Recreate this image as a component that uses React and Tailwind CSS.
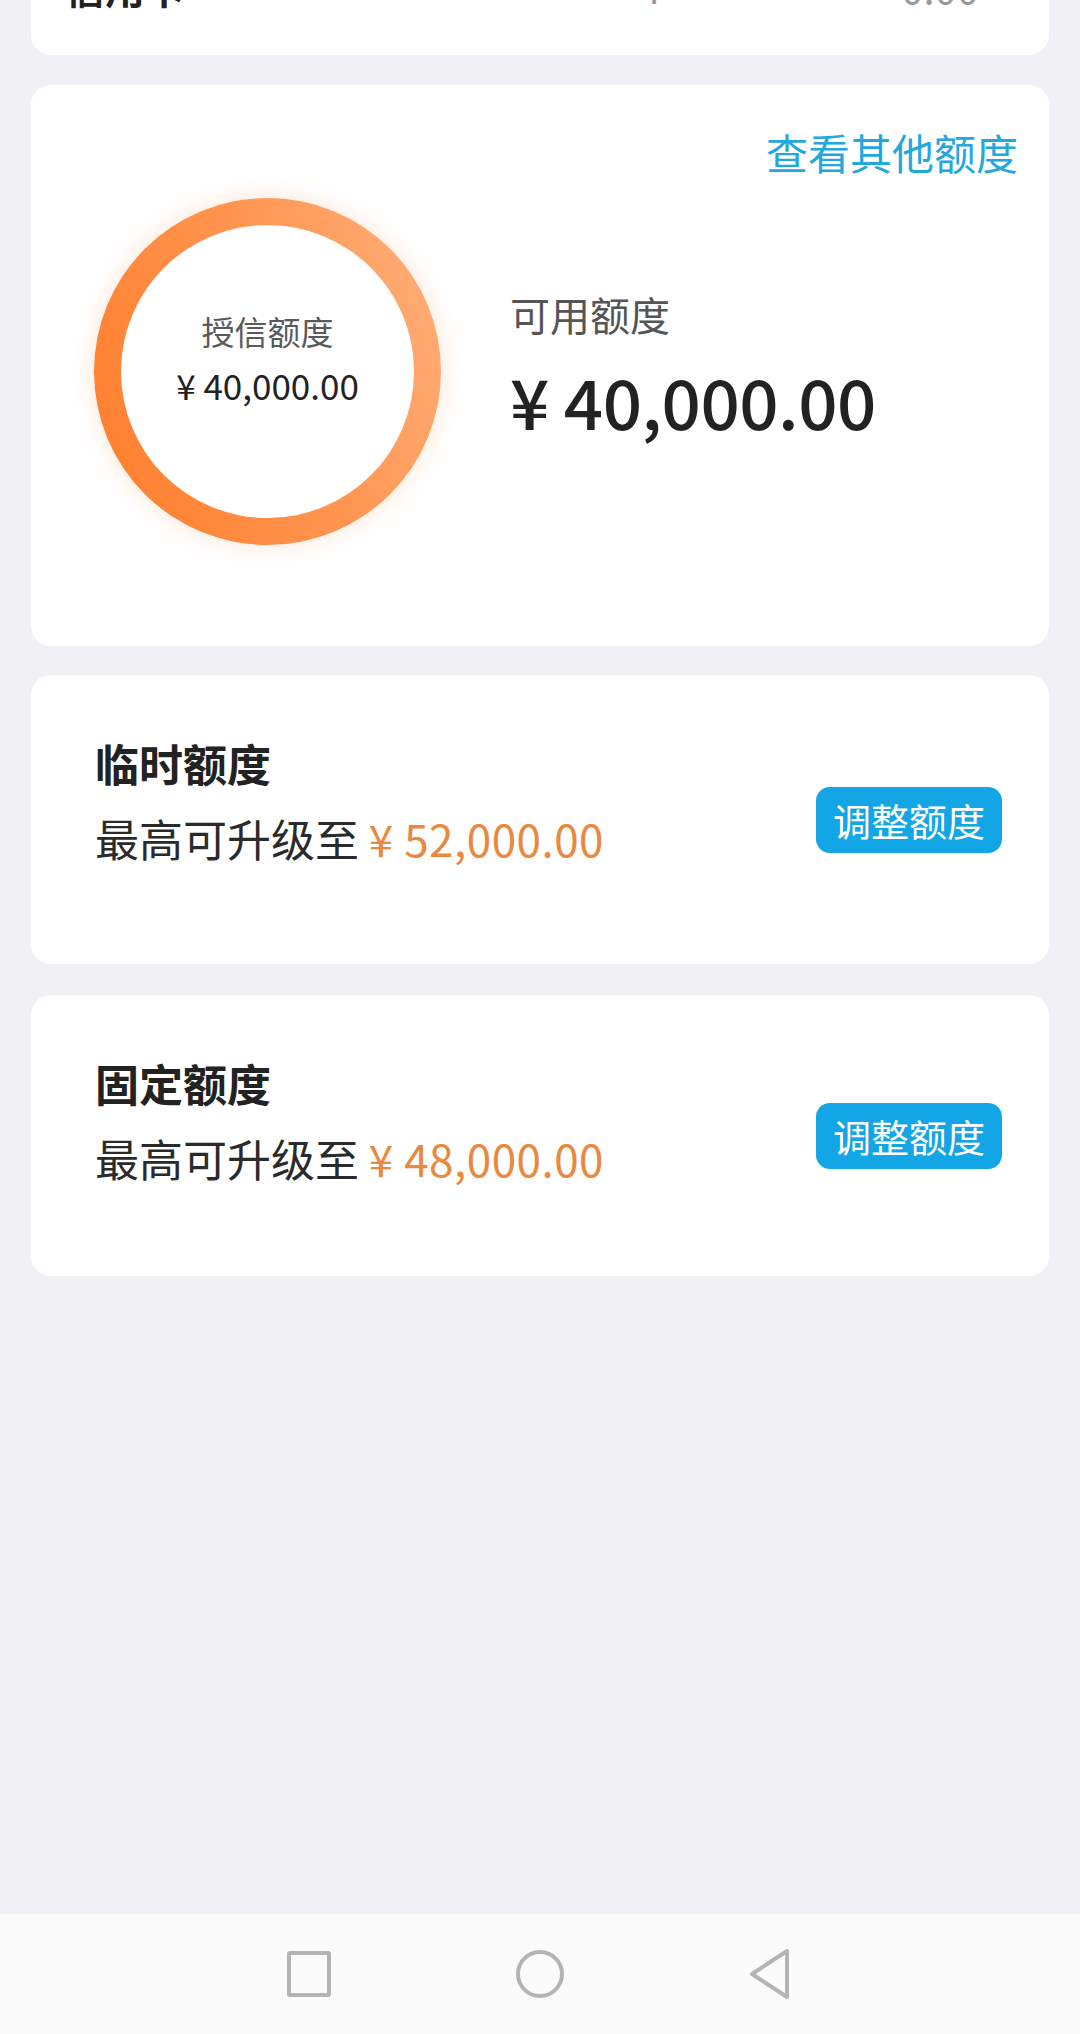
import React from "react";

const cjk = { fontFamily: '"Noto Sans CJK SC", "Noto Sans", sans-serif' };

const LimitCard = ({ title, amount, className }) => (
  <div className={`flex items-start justify-between bg-white rounded-[20px] pl-[64px] pr-[47px] ${className}`}>
    <div className="flex flex-col pt-[66px]">
      <p className="text-[44px] leading-[44px] font-bold text-[#222]">{title}</p>
      <p className="mt-[31px] text-[44px] leading-[44px] text-[#2a2a2a]">
        最高可升级至 <span className="text-[#e8893f] tracking-[0.5px]">¥ {amount}</span>
      </p>
    </div>
    <button className="self-center w-[186px] h-[66px] rounded-[14px] bg-[#13a6e6] text-white text-[38px] leading-none">
      调整额度
    </button>
  </div>
);

const App = () => {
  return (
    <div className="min-h-[2034px] flex flex-col bg-[#f0f0f5]" style={cjk}>
      <main className="flex-1 flex flex-col px-[31px]">
        {/* cut off card at the top */}
        <div className="h-[55px] overflow-hidden bg-white rounded-b-[20px]">
          <div className="-mt-[33px] flex items-start px-[34px] text-[40px] leading-[40px]">
            <span className="font-bold text-[#222]">信用卡</span>
            <span className="ml-[458px] text-[#999]">¥</span>
            <span className="ml-[236px] text-[#999]">0.00</span>
          </div>
        </div>

        {/* credit ring card */}
        <div className="mt-[30px] h-[561px] bg-white rounded-[20px] flex flex-col">
          <div className="flex justify-end pt-[46px] pr-[31px]">
            <a href="#" className="text-[42px] leading-[42px] text-[#23a7dd]">查看其他额度</a>
          </div>
          <div className="flex items-center mt-[25px] pl-[63px]">
            <div className="w-[347px] h-[347px] rounded-full p-[27px] bg-[linear-gradient(70deg,#ff7d2a,#ff9550_55%,#ffb17e)] shadow-[0_0_26px_rgba(255,140,60,0.22)]">
              <div className="w-full h-full rounded-full bg-white flex flex-col items-center justify-center pb-[26px]">
                <p className="text-[33px] leading-[33px] text-[#5a5a5a]">授信额度</p>
                <p className="mt-[19px] text-[35px] leading-[35px] text-[#222]">¥ 40,000.00</p>
              </div>
            </div>
            <div className="ml-[69px] flex flex-col -mt-[14px]">
              <p className="text-[40px] leading-[40px] text-[#555]">可用额度</p>
              <p className="mt-[32px] text-[69px] leading-[69px] font-medium tracking-[-0.5px] text-[#222]">¥ 40,000.00</p>
            </div>
          </div>
        </div>

        <LimitCard title="临时额度" amount="52,000.00" className="mt-[29px] h-[289px]" />
        <LimitCard title="固定额度" amount="48,000.00" className="mt-[31px] h-[281px]" />
      </main>

      {/* system nav bar */}
      <nav className="h-[120px] bg-[#fbfbfb] flex items-center justify-center">
        <div className="flex items-center">
          <div className="w-[44px] h-[46px] border-[4px] border-[#b4b4b4] rounded-[3px]" />
          <div className="ml-[185px] w-[48px] h-[48px] border-[4px] border-[#b4b4b4] rounded-full" />
          <svg className="ml-[183px]" width="46" height="52" viewBox="0 0 46 52" fill="none">
            <path d="M40 3 L40 49 L5 26 Z" stroke="#b4b4b4" strokeWidth="4" strokeLinejoin="round" />
          </svg>
        </div>
      </nav>
    </div>
  );
};

export default App;
